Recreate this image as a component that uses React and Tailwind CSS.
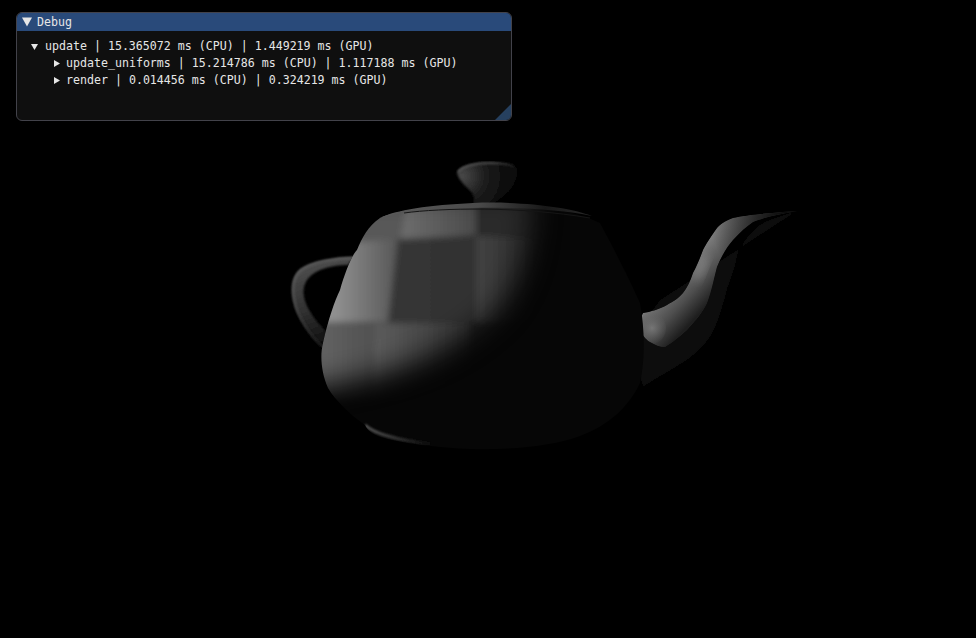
const rows = [
  { text: "update_uniforms | 15.214786 ms (CPU) | 1.117188 ms (GPU)" },
  { text: "render | 0.014456 ms (CPU) | 0.324219 ms (GPU)" },
];

function Arrow({ open }) {
  return (
    <svg width="8" height="8" viewBox="0 0 8 8" className="shrink-0">
      {open ? <polygon points="0,1 7,1 3.5,7" fill="#e6e6e6" /> : <polygon points="1,0 7,3.5 1,7" fill="#e6e6e6" />}
    </svg>
  );
}

function Teapot() {
  const body =
    "M380 218 C392 212 420 207 473 204 C520 203 570 208 600 223 C612 245 630 280 640 303 C645 330 645 360 640 383 C630 405 610 425 580 436 C550 447 510 450 470 449 C440 448 400 443 380 437 C372 434 367 430 365 425 C350 415 335 400 328 388 C321 372 320 355 323 343 C328 320 335 300 340 290 C345 272 352 255 357 250 C362 238 368 226 380 218 Z";
  const spout =
    "M797 211 C785 212 750 214 733 218 C724 221 720 225 717 228 C710 238 706 244 703 250 C700 258 697 266 693 273 C690 282 687 288 683 293 C678 299 672 302 667 305 C660 309 650 312 643 313 C639 320 639 326 640 330 C643 337 648 341 650 342 C655 345 660 347 665 347 C672 343 680 336 687 330 C696 320 703 312 707 303 C712 290 714 278 717 267 C722 255 727 247 733 240 C740 232 747 226 753 222 C765 217 785 213 797 211 Z";
  return (
    <svg width="976" height="638" viewBox="0 0 976 638" className="absolute inset-0">
      <defs>
        <clipPath id="bodyClip">
          <path d={body} />
        </clipPath>
        <clipPath id="spoutClip">
          <path d={spout} />
        </clipPath>
        <filter id="blurPatch" x="-20%" y="-20%" width="140%" height="140%">
          <feGaussianBlur stdDeviation="3" />
        </filter>
        <filter id="blurWide" x="-30%" y="-30%" width="160%" height="160%">
          <feGaussianBlur stdDeviation="14" />
        </filter>
        <filter id="blurMid" x="-30%" y="-30%" width="160%" height="160%">
          <feGaussianBlur stdDeviation="5" />
        </filter>
        <filter id="blurSoft" x="-20%" y="-20%" width="140%" height="140%">
          <feGaussianBlur stdDeviation="1" />
        </filter>
        <mask id="litMask" maskUnits="userSpaceOnUse" x="280" y="180" width="400" height="300">
          <path
            d="M290 190 L530 190 C535 240 520 285 495 312 C460 345 420 368 325 386 L290 386 Z"
            fill="#fff"
            filter="url(#blurWide)"
          />
        </mask>
        <linearGradient id="p1" gradientUnits="userSpaceOnUse" x1="335" x2="398" y1="0" y2="0">
          <stop offset="0" stopColor="#909090" />
          <stop offset="1" stopColor="#565656" />
        </linearGradient>
        <linearGradient id="p2" gradientUnits="userSpaceOnUse" x1="398" x2="476" y1="0" y2="0">
          <stop offset="0" stopColor="#363636" />
          <stop offset="1" stopColor="#303030" />
        </linearGradient>
        <linearGradient id="p3" gradientUnits="userSpaceOnUse" x1="407" x2="476" y1="0" y2="0">
          <stop offset="0" stopColor="#6a6a6a" />
          <stop offset="1" stopColor="#4a4a4a" />
        </linearGradient>
        <linearGradient id="p4" gradientUnits="userSpaceOnUse" x1="476" x2="560" y1="0" y2="0">
          <stop offset="0" stopColor="#424242" />
          <stop offset="1" stopColor="#222222" />
        </linearGradient>
        <linearGradient id="p5" gradientUnits="userSpaceOnUse" x1="320" x2="375" y1="0" y2="0">
          <stop offset="0" stopColor="#626262" />
          <stop offset="1" stopColor="#505050" />
        </linearGradient>
        <linearGradient id="p6" gradientUnits="userSpaceOnUse" x1="375" x2="470" y1="0" y2="0">
          <stop offset="0" stopColor="#5c5c5c" />
          <stop offset="1" stopColor="#343434" />
        </linearGradient>
        <linearGradient id="lidShade" gradientUnits="userSpaceOnUse" x1="380" x2="600" y1="0" y2="0">
          <stop offset="0" stopColor="#5a5a5a" />
          <stop offset="0.45" stopColor="#4a4a4a" />
          <stop offset="0.75" stopColor="#181818" />
          <stop offset="1" stopColor="#2a2a2a" />
        </linearGradient>
        <linearGradient id="rimShade" gradientUnits="userSpaceOnUse" x1="457" x2="517" y1="0" y2="0">
          <stop offset="0" stopColor="#5c5c5c" />
          <stop offset="0.6" stopColor="#484848" />
          <stop offset="1" stopColor="#181818" />
        </linearGradient>
        <radialGradient id="knobShade" gradientUnits="userSpaceOnUse" cx="462" cy="176" r="48">
          <stop offset="0" stopColor="#484848" />
          <stop offset="0.5" stopColor="#1c1c1c" />
          <stop offset="1" stopColor="#0a0a0a" />
        </radialGradient>
        <linearGradient id="handleShade" gradientUnits="userSpaceOnUse" x1="300" x2="330" y1="262" y2="345">
          <stop offset="0" stopColor="#505050" />
          <stop offset="0.55" stopColor="#303030" />
          <stop offset="1" stopColor="#0c0c0c" />
        </linearGradient>
        <linearGradient id="handleEdge" gradientUnits="userSpaceOnUse" x1="300" x2="322" y1="258" y2="345">
          <stop offset="0" stopColor="#666666" />
          <stop offset="0.5" stopColor="#4a4a4a" />
          <stop offset="1" stopColor="#1a1a1a" />
        </linearGradient>
        <linearGradient id="spoutShade" gradientUnits="userSpaceOnUse" x1="680" x2="712" y1="270" y2="300">
          <stop offset="0" stopColor="#7c7c7c" />
          <stop offset="0.55" stopColor="#4e4e4e" />
          <stop offset="1" stopColor="#1e1e1e" />
        </linearGradient>
        <linearGradient id="spoutTip" gradientUnits="userSpaceOnUse" x1="715" x2="797" y1="245" y2="211">
          <stop offset="0" stopColor="#000" stopOpacity="0" />
          <stop offset="0.55" stopColor="#000" stopOpacity="0.55" />
          <stop offset="1" stopColor="#000" stopOpacity="0.85" />
        </linearGradient>
        <radialGradient id="spoutBulb" gradientUnits="userSpaceOnUse" cx="652" cy="328" r="17">
          <stop offset="0" stopColor="#767676" />
          <stop offset="1" stopColor="#5a5a5a" stopOpacity="0" />
        </radialGradient>
        <linearGradient id="footShade" gradientUnits="userSpaceOnUse" x1="365" x2="430" y1="0" y2="0">
          <stop offset="0" stopColor="#565656" />
          <stop offset="1" stopColor="#0e0e0e" />
        </linearGradient>
      </defs>

      {/* handle */}
      <path
        d="M354 257 C335 258 312 262 300 270 C292 277 290 290 295 307 C299 320 312 338 323 348 L326 331 C316 322 306 308 304 297 C302 286 306 276 320 270 C330 266 340 265 348 265 Z"
        fill="url(#handleShade)"
        filter="url(#blurSoft)"
      />
      <path
        d="M354 258 C335 258 312 262 301 270 C293 277 291 290 296 307 C300 320 312 338 323 347"
        fill="none"
        stroke="url(#handleEdge)"
        strokeWidth="2.5"
        filter="url(#blurSoft)"
      />

      {/* spout, the dark outer side first */}
      <path
        d="M797 211 C780 216 765 220 757 227 C745 238 738 250 737 257 C735 270 730 280 727 290 C722 310 716 328 710 337 C702 348 695 354 687 360 C675 368 660 376 643 387 L630 340 L660 300 Z"
        fill="#090909"
        filter="url(#blurSoft)"
      />
      <g clipPath="url(#spoutClip)">
        <rect x="630" y="205" width="175" height="150" fill="#262626" />
        <path d={spout} fill="url(#spoutShade)" />
        <rect x="630" y="205" width="175" height="150" fill="url(#spoutTip)" />
        <ellipse cx="652" cy="328" rx="14" ry="16" fill="url(#spoutBulb)" />
        <ellipse
          cx="701"
          cy="268"
          rx="5"
          ry="14"
          fill="#9a9a9a"
          opacity="0.5"
          filter="url(#blurMid)"
          transform="rotate(22 701 268)"
        />
      </g>

      {/* body */}
      <path d={body} fill="#060606" />
      <g clipPath="url(#bodyClip)">
        <g mask="url(#litMask)">
          <g filter="url(#blurPatch)">
            <rect x="300" y="200" width="700" height="300" fill="#2a2a2a" />
            <polygon points="350,205 407,205 400,240 340,248" fill="#585858" />
            <polygon points="407,200 476,196 476,235 400,240" fill="url(#p3)" />
            <polygon points="476,196 560,200 565,240 476,235" fill="#2a2a2a" />
            <polygon points="330,244 398,239 388,322 320,322" fill="url(#p1)" />
            <polygon points="398,239 476,236 476,322 388,322" fill="url(#p2)" />
            <polygon points="476,236 565,240 570,322 476,322" fill="url(#p4)" />
            <polygon points="310,322 375,323 372,400 310,400" fill="url(#p5)" />
            <polygon points="375,323 470,323 470,400 372,400" fill="url(#p6)" />
            <polygon points="470,323 560,323 560,400 470,400" fill="#262626" />
          </g>
        </g>
        <path
          d="M365 425 C375 435 400 440 430 444"
          stroke="url(#footShade)"
          strokeWidth="3"
          fill="none"
          filter="url(#blurSoft)"
        />
      </g>

      {/* lid and knob */}
      <path
        d="M473 204 C475 200 474 197 472 193 C467 187 458 180 457 173 C460 166 475 162 490 162 C503 162 513 164 517 168 C519 176 514 185 510 190 C504 197 497 200 494 204 Z"
        fill="url(#knobShade)"
        filter="url(#blurSoft)"
      />
      <path
        d="M458 172 C462 166 476 163 490 163 C500 163 508 164 514 166"
        fill="none"
        stroke="url(#rimShade)"
        strokeWidth="2"
        filter="url(#blurSoft)"
      />
      <path
        d="M380 218 C395 210 430 205 473 203 C520 201 570 207 592 216 C560 209 510 207 470 208 C430 209 400 212 380 218 Z"
        fill="url(#lidShade)"
      />
      <path d="M404 213 C440 208 520 206 590 218" stroke="#151515" strokeWidth="1" fill="none" />
    </svg>
  );
}

export default function App() {
  return (
    <div className="relative w-[976px] h-[638px] overflow-hidden bg-black font-['DejaVu_Sans_Mono',monospace] text-[11.62px] leading-[17px] text-[#e6e6e6]">
      <Teapot />
      <div className="relative ml-4 mt-3 w-[496px] h-[109px] overflow-hidden rounded-[6px] border border-[#42424a] bg-[#0f0f0f]">
        <div className="flex h-[18px] items-center gap-[5px] bg-[#294a7a] pl-[5px]">
          <svg width="10" height="10" viewBox="0 0 10 10" className="shrink-0">
            <polygon points="0,0.5 10,0.5 5,9.5" fill="#e6e6e6" />
          </svg>
          <span>Debug</span>
        </div>
        <div className="pt-[7px] pl-[14px]">
          <div className="flex h-[17px] items-center gap-[6px]">
            <Arrow open />
            <span className="whitespace-pre">update | 15.365072 ms (CPU) | 1.449219 ms (GPU)</span>
          </div>
          {rows.map((row) => (
            <div key={row.text} className="flex h-[17px] items-center gap-[5px] pl-[22px]">
              <Arrow />
              <span className="whitespace-pre">{row.text}</span>
            </div>
          ))}
        </div>
        <div className="absolute bottom-0 right-0 h-[16px] w-[16px] bg-[#26405f] [clip-path:polygon(100%_0,100%_100%,0_100%)]" />
      </div>
    </div>
  );
}
